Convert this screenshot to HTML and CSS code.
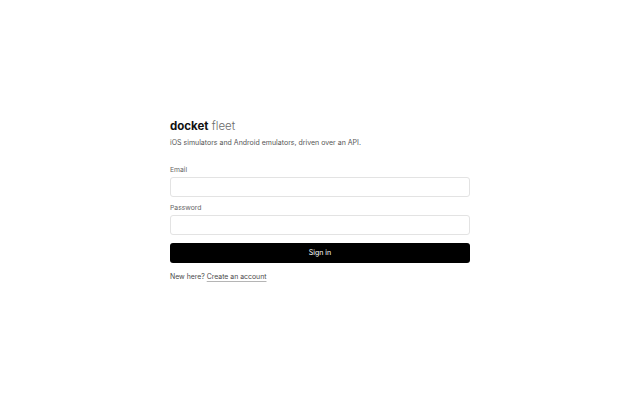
FILE: index.html
```html
<!DOCTYPE html>
<html lang="en">
<head>
<meta charset="utf-8">
<title>docket fleet — Sign in</title>
<link rel="stylesheet" href="styles.css">
</head>
<body>
<main class="page">
  <section class="card">
    <h1 class="brand"><span class="brand-strong">docket</span> <span class="brand-light">fleet</span></h1>
    <p class="tagline">iOS simulators and Android emulators, driven over an API.</p>
    <form class="form">
      <label class="field">
        <span class="label">Email</span>
        <input class="input" type="email">
      </label>
      <label class="field">
        <span class="label">Password</span>
        <input class="input" type="password">
      </label>
      <button class="button" type="button">Sign in</button>
    </form>
    <p class="footer">New here? <a class="link" href="#">Create an account</a></p>
  </section>
</main>
</body>
</html>
```

FILE: styles.css
```css
* { box-sizing: border-box; }
html, body { margin: 0; padding: 0; background: #fff; }
body {
  font-family: Inter, "Noto Sans", sans-serif;
  color: #222;
}
.page {
  min-height: 400px;
  display: flex;
  align-items: center;
  justify-content: center;
}
.card {
  width: 300px;
  display: flex;
  flex-direction: column;
}
.brand {
  margin: 0;
  font-size: 11.5px;
  line-height: 14px;
  font-weight: 400;
}
.brand-strong { font-weight: 700; color: #111; }
.brand-light { font-weight: 300; color: #6a6a6a; }
.tagline {
  margin: 5px 0 0;
  font-size: 7px;
  line-height: 10px;
  color: #555;
}
.form {
  margin-top: 17px;
  display: flex;
  flex-direction: column;
}
.field {
  display: flex;
  flex-direction: column;
  gap: 3px;
  margin-bottom: 6px;
}
.label {
  font-size: 6.8px;
  line-height: 9px;
  color: #666;
}
.input {
  height: 20px;
  border: 1px solid #e3e3e3;
  border-radius: 3px;
  background: #fff;
  margin: 0;
  padding: 0 6px;
  font: inherit;
}
.button {
  margin-top: 2px;
  height: 20px;
  border: 0;
  border-radius: 3px;
  background: #000;
  color: #fff;
  font-family: inherit;
  font-size: 7px;
  padding: 0;
}
.footer {
  margin: 9px 0 0;
  font-size: 6.9px;
  line-height: 10px;
  color: #4a4a4a;
}
.link {
  color: #4a4a4a;
  text-decoration: underline;
  text-decoration-color: #b5b5b5;
  text-underline-offset: 1.5px;
}
```
